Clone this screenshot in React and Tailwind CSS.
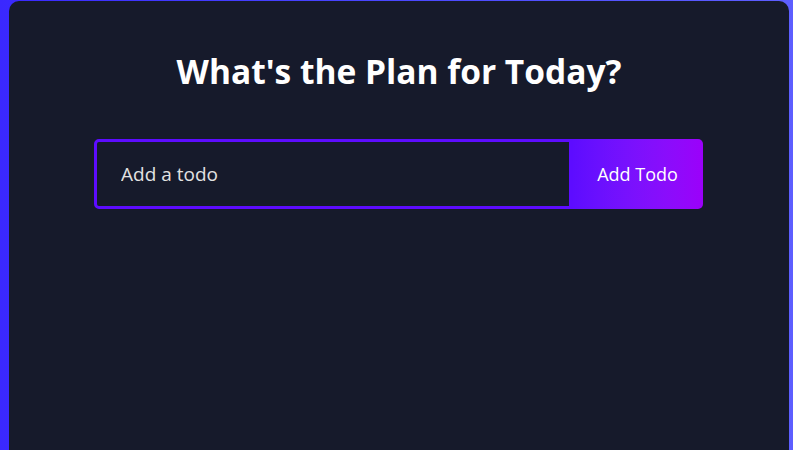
export default function App() {
  return (
    <div className="w-[793px] h-[450px] overflow-hidden bg-gradient-to-r from-[#3a28ff] to-[#5d5eff] pt-px" style={{ fontFamily: '"Open Sans", "Noto Sans", sans-serif' }}>
      <div className="ml-[9px] w-[780px] h-[470px] bg-[#161a2b] rounded-[10px] flex flex-col items-center">
        <h1 className="mt-[47px] text-[33.5px] leading-[46px] font-bold text-white">What's the Plan for Today?</h1>
        <form className="mt-[45px] ml-[-1px] flex w-[609px] h-[70px]" onSubmit={(e) => e.preventDefault()}>
          <input
            className="flex-1 min-w-0 h-full bg-transparent border-[3px] border-[#5d0cff] rounded-l-[5px] pl-[24px] text-[19px] text-[#e2e2e2] placeholder:text-[#e2e2e2] outline-none"
            placeholder="Add a todo"
          />
          <button className="w-[131px] h-full rounded-r-[5px] bg-gradient-to-r from-[#5d0cff] to-[#9b00fa] text-white text-[18px]">Add Todo</button>
        </form>
      </div>
    </div>
  );
}
